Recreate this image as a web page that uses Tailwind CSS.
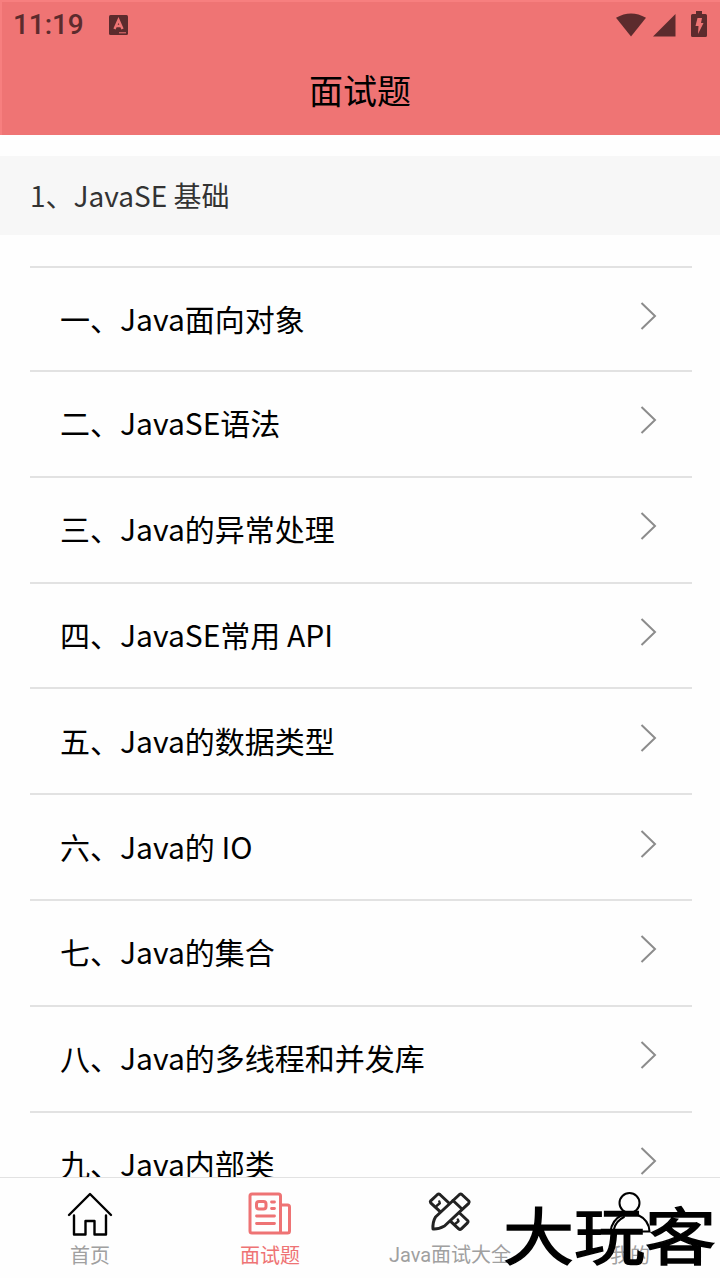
<!DOCTYPE html>
<html lang="zh-CN">
<head>
  <meta charset="UTF-8" />
  <meta name="viewport" content="width=device-width, initial-scale=1" />
  <title>面试题</title>
  <script src="https://cdn.jsdelivr.net/npm/@tailwindcss/browser@4"></script>
</head>
<body class="relative flex h-screen flex-col overflow-hidden bg-[#fefefe] font-['Noto_Sans_CJK_SC',sans-serif] text-black">
  <header class="h-[135px] shrink-0 border-t-2 border-l-2 border-[#f77f7f] bg-[#ef7474]">
    <div class="flex h-[46px] items-center pr-[13px] pl-[11px] text-[#5c2b2d]">
      <span class="w-[70px] font-['Roboto',sans-serif] text-[28px] font-medium whitespace-nowrap tracking-[-0.1px]">11:19</span>
      <svg class="ml-[26px] h-5 w-[19px]" viewBox="0 0 19 20">
        <rect width="19" height="20" rx="1.5" fill="currentColor" />
        <path d="M5.5 14L9.5 5L13.5 14M7 11h5" fill="none" stroke="#ef7474" stroke-width="2.4" />
        <path d="M10 17.8h7" stroke="#ef7474" stroke-width="1" />
      </svg>
      <svg class="mr-[5px] ml-auto h-6 w-[32px]" viewBox="0 0 32 24">
        <path d="M1 4.8Q16 -4 31 4.8L16 23.5Z" fill="currentColor" />
      </svg>
      <svg class="mr-[15px] h-6 w-[24px]" viewBox="0 0 24 24">
        <path d="M23.5 1V23.5H1Z" fill="currentColor" />
      </svg>
      <svg class="mb-[2px] h-[26px] w-4" viewBox="0 0 16 26">
        <path d="M5 0h6v3h3.5a1.5 1.5 0 0 1 1.5 1.5v20a1.5 1.5 0 0 1-1.5 1.5h-13a1.5 1.5 0 0 1-1.5-1.5v-20a1.5 1.5 0 0 1 1.5-1.5h3.5z" fill="currentColor" />
        <path d="M6.5 7h4.500l-1 5h2.500l-5.500 11 .5-8h-3z" fill="#ef7474" />
      </svg>
    </div>
    <h1 class="mt-[17px] pr-[2px] text-center text-[34px] leading-[50px]">面试题</h1>
  </header>

  <main class="min-h-0 flex-1 overflow-hidden pt-[21px]">
    <h2 class="flex h-[79px] items-center bg-[#f7f7f7] pb-[2px] pl-[30px] text-[28px] text-[#333]">1、JavaSE 基础</h2>
    <ul id="topics" class="mt-[31px] mr-[28px] ml-[30px]"></ul>
  </main>

  <nav class="grid h-[101px] shrink-0 grid-cols-4 border-t border-[#e2e2e2] text-[20px] leading-[28px] text-[#a0a0a0]">
    <a class="flex flex-col items-center pt-[13px]">
      <svg class="h-[46px] w-12 text-black" viewBox="0 0 48 46" fill="none" stroke="currentColor" stroke-width="2.4" stroke-linecap="round" stroke-linejoin="round">
        <path d="M3 24L24 3L45 24M8 24.500V43.500H19.500V30H28.500V43.500H40V24.500" />
      </svg>
      <span class="mt-[4px]">首页</span>
    </a>
    <a class="flex flex-col items-center pt-[13px] text-[#ee7374]">
      <svg class="h-[46px] w-12" viewBox="0 0 48 46" fill="none" stroke="currentColor" stroke-width="3" stroke-linecap="round" stroke-linejoin="round">
        <path d="M34.500 42H6a2 2 0 0 1-2-2V5a2 2 0 0 1 2-2H32.500a2 2 0 0 1 2 2V42H41.500a2 2 0 0 0 2-2V16a2 2 0 0 0-2-2H35" />
        <rect x="10.500" y="10.500" width="9.500" height="7.500" rx="2.500" />
        <path d="M25.500 11h3M25.500 17.500h3M10.500 25h18M10.500 32.500h18" stroke-width="2.800" />
      </svg>
      <span class="mt-[4px]">面试题</span>
    </a>
    <a class="flex flex-col items-center pt-[13px]">
      <svg class="h-[46px] w-12 text-[#222]" viewBox="0 0 48 46" fill="none" stroke="currentColor" stroke-width="3" stroke-linecap="round" stroke-linejoin="round">
        <path d="M4.700 9.800L11.500 3.500Q12.700 2.500 13.900 3.500L41.500 29.500Q42.500 30.700 41.500 31.800L35.300 37.800Q34 38.900 32.700 37.800L4.700 11.800Q3.900 10.800 4.700 9.800Z" />
        <path d="M10.500 15L13.800 12.300L13.300 10.500M29 33L32.500 30.300L31.800 28.500" stroke-width="2.400" />
        <path d="M33.500 3.500Q34.700 2.600 35.800 3.500L42.800 10Q43.700 11.200 42.700 12.300L18.500 35Q12 38.500 7 38Q6.500 31 9.500 26Z" fill="#fefefe" />
        <path d="M27 9.500L36 18" />
      </svg>
      <span class="mt-[4px] font-['Roboto','Noto_Sans_CJK_SC',sans-serif]">Java面试大全</span>
    </a>
    <a class="flex flex-col items-center pt-[13px]">
      <svg class="h-[46px] w-12 text-black" viewBox="0 0 48 46" fill="none" stroke="currentColor" stroke-width="2" stroke-linecap="round">
        <circle cx="23.500" cy="12" r="10" />
        <path d="M16 24Q6 29 4.500 40.500H43.500Q43 29 32 24M18 26Q10 30 8 38" />
      </svg>
      <span class="mt-[4px]">我的</span>
    </a>
  </nav>

  <div class="pointer-events-none absolute right-[4px] bottom-[11px] flex h-[68px] origin-center scale-y-[0.88] items-center text-[71px] leading-none font-normal whitespace-nowrap text-black [-webkit-text-stroke:1.6px_black]">大玩客</div>

  <script>
    const topics = [
      '一、Java面向对象',
      '二、JavaSE语法',
      '三、Java的异常处理',
      '四、JavaSE常用 API',
      '五、Java的数据类型',
      '六、Java的 IO',
      '七、Java的集合',
      '八、Java的多线程和并发库',
      '九、Java内部类'
    ];

    document.getElementById('topics').innerHTML = topics.map(name => `
      <li class="flex h-[105.8px] items-center justify-between border-t-2 border-[#e2e2e2] pr-[35px] pl-[30px] text-[30px] first:h-[104px]">
        <span class="mb-[2px]">${name}</span>
        <svg class="mb-[7px] h-[30px] w-[17px] text-[#8c8c8c]" viewBox="0 0 17 30" fill="none" stroke="currentColor" stroke-width="2">
          <path d="M1.500 2L15 15L1.500 28" />
        </svg>
      </li>`).join('');
  </script>
</body>
</html>
